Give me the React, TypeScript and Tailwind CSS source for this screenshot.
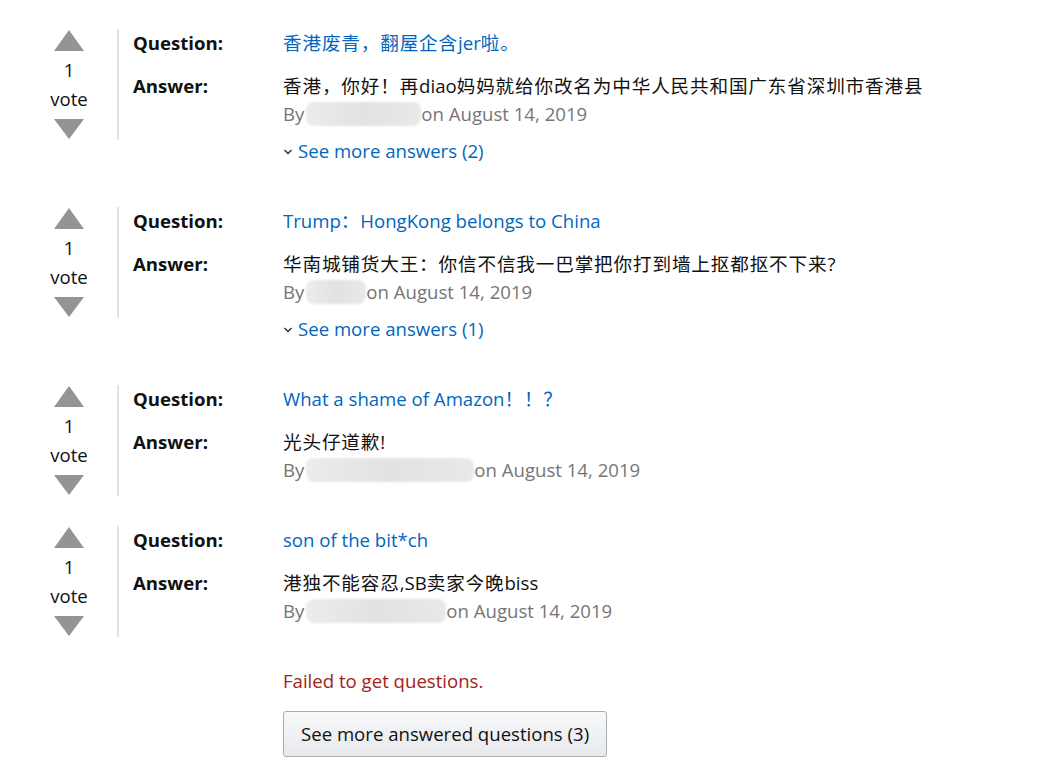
import React from "react";

const FONT = { fontFamily: '"Open Sans", "Noto Sans CJK SC", sans-serif' };

function Up() {
  return (
    <svg width="30" height="21" viewBox="0 0 30 21">
      <polygon points="15,0 30,21 0,21" fill="#949494" />
    </svg>
  );
}
function Down() {
  return (
    <svg width="30" height="20" viewBox="0 0 30 20">
      <polygon points="0,0 30,0 15,20" fill="#949494" />
    </svg>
  );
}

function Blur({ w, offset = 0 }: { w: number; offset?: number }) {
  return (
    <span
      className="inline-block h-[24px] align-middle rounded-[8px] bg-gradient-to-r from-[#ececec] via-[#e2e2e2] to-[#e9e9e9] blur-[1px]"
      style={{ width: w, marginLeft: offset }}
    />
  );
}

function Mixed({ text }: { text: string }) {
  const parts = text.split(/([\u3000-\u303f\u4e00-\u9fff\uff00-\uffef]+)/).filter(Boolean);
  return (
    <>
      {parts.map((p, i) =>
        /[\u3000-\u303f\u4e00-\u9fff\uff00-\uffef]/.test(p) ? (
          <span key={i} className="tracking-[0.85px]">{p}</span>
        ) : (
          <span key={i}>{p}</span>
        )
      )}
    </>
  );
}

type Item = { q: string; a: string; blur: number; more?: number };

const items: Item[] = [
  { q: "香港废青，翻屋企含jer啦。", a: "香港，你好！再diao妈妈就给你改名为中华人民共和国广东省深圳市香港县", blur: 115, more: 2 },
  { q: "Trump：HongKong belongs to China", a: "华南城铺货大王：你信不信我一巴掌把你打到墙上抠都抠不下来?", blur: 60, more: 1 },
  { q: "What a shame of Amazon！！？", a: "光头仔道歉!", blur: 168 },
  { q: "son of the bit*ch", a: "港独不能容忍,SB卖家今晚biss", blur: 140 },
];

function Block({ it }: { it: Item }) {
  return (
    <div className="flex items-start mb-[30px]">
      <div className="flex h-[111px] pl-[44px] pr-[23px] border-r-2 border-[#e3e3e3]">
        <div className="w-[50px] flex flex-col items-center">
          <div className="mt-[1px]"><Up /></div>
          <div className="h-[26px] mt-[6px] leading-[26px] text-[18.6px] text-[#111]">1</div>
          <div className="h-[26px] mt-[3px] leading-[26px] text-[18.6px] text-[#111]">vote</div>
          <div className="mt-[7px]"><Down /></div>
        </div>
      </div>
      <div className="pl-[14px] text-[18.6px]">
        <div className="flex h-[28px] items-center">
          <div className="w-[150px] font-bold text-[#111]">Question:</div>
          <div className="text-[#0066c0] whitespace-nowrap"><Mixed text={it.q} /></div>
        </div>
        <div className="flex h-[28px] mt-[15px] items-center">
          <div className="w-[150px] font-bold text-[#111]">Answer:</div>
          <div className="text-[#111] whitespace-nowrap"><Mixed text={it.a} /></div>
        </div>
        <div className="flex h-[28px] items-center">
          <div className="w-[150px]" />
          <div className="text-[#767676] flex items-center whitespace-nowrap">
            <span>By</span>
            <Blur w={it.blur} offset={2} />
            <span>on August 14, 2019</span>
          </div>
        </div>
        {it.more !== undefined && (
          <div className="flex h-[28px] mt-[9px] mb-[12px] items-center">
            <div className="w-[150px]" />
            <div className="text-[#0066c0] flex items-center">
              <svg width="10" height="8" viewBox="0 0 10 8" className="mr-[5px] mt-[2px]">
                <polyline points="1.5,2 5,5.5 8.5,2" fill="none" stroke="#333" strokeWidth="1.5" />
              </svg>
              See more answers ({it.more})
            </div>
          </div>
        )}
      </div>
    </div>
  );
}

export default function App() {
  return (
    <div className="w-[1048px] h-[763px] bg-white overflow-hidden pt-[29px]" style={FONT}>
      {items.map((it, i) => (
        <Block key={i} it={it} />
      ))}
      <div className="pl-[283px]">
        <div className="h-[28px] leading-[28px] text-[18.6px] text-[#a32218]">Failed to get questions.</div>
        <button className="mt-[16px] h-[46px] px-[17px] rounded-[3px] border border-[#a9acb2] bg-gradient-to-b from-[#f7f8fa] to-[#e7e9ec] text-[18.6px] text-[#111] shadow-[0_1px_0_rgba(255,255,255,0.6)_inset]">
          See more answered questions (3)
        </button>
      </div>
    </div>
  );
}
